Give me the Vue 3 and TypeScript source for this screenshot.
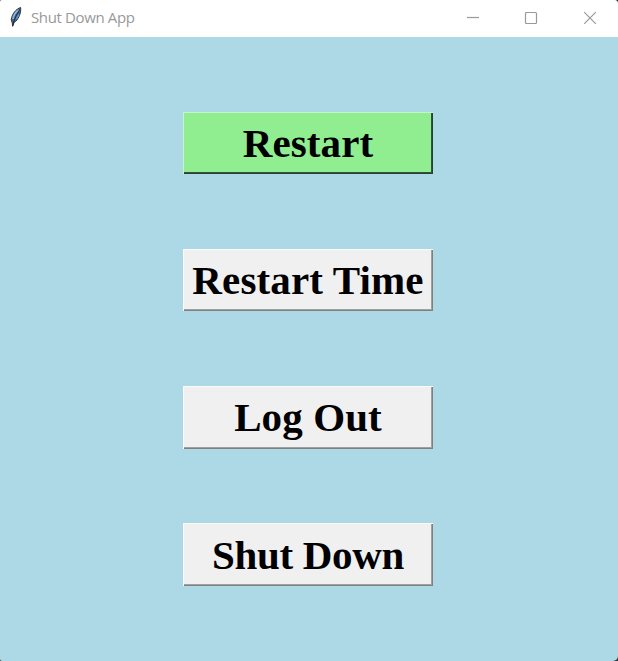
<script setup lang="ts">
interface Action {
  id: string
  label: string
  active: boolean
}

const actions: Action[] = [
  { id: 'restart', label: 'Restart', active: true },
  { id: 'restart-time', label: 'Restart Time', active: false },
  { id: 'log-out', label: 'Log Out', active: false },
  { id: 'shut-down', label: 'Shut Down', active: false },
]
</script>

<template>
  <div class="desktop">
    <div class="window">
      <header class="titlebar">
        <svg class="feather" width="14" height="20" viewBox="0 0 14 20">
          <path d="M11.6 .5 C7 2 3.1 6.6 2.2 12.8 L3.3 16 L3.6 19.3 L5 15.6 C9.3 13 12.4 6 11.6 .5Z" fill="#3e6793" stroke="#34383d" stroke-width="1" />
          <path d="M9.8 3 C6.5 5 4.5 8.5 4 12" fill="none" stroke="#86b6df" stroke-width="1.7" />
          <path d="M10.8 2.2 C8.3 7 5.2 11 3.7 19" fill="none" stroke="#20252d" stroke-width=".9" />
          <path d="M10 7.5 L7.3 11.8" stroke="#6098cc" stroke-width="1.5" />
        </svg>
        <span class="title">Shut Down App</span>
        <div class="controls">
          <button class="control" aria-label="Minimize">
            <svg width="14" height="14" viewBox="0 0 14 14"><path d="M1 6.5H13" /></svg>
          </button>
          <button class="control" aria-label="Maximize">
            <svg width="14" height="14" viewBox="0 0 14 14"><rect x="1.5" y="1.5" width="11" height="11" rx="1" /></svg>
          </button>
          <button class="control close" aria-label="Close">
            <svg width="14" height="14" viewBox="0 0 14 14"><path d="M1.2 1.2L12.8 12.8M12.8 1.2L1.2 12.8" /></svg>
          </button>
        </div>
      </header>
      <main class="content">
        <button
          v-for="action in actions"
          :key="action.id"
          class="action"
          :class="[action.id, { active: action.active }]"
        >
          {{ action.label }}
        </button>
      </main>
    </div>
  </div>
</template>

<style>
body {
  margin: 0;
}
</style>

<style scoped>
.desktop {
  width: 618px;
  height: 661px;
  background: #30363a;
}
.window {
  display: flex;
  flex-direction: column;
  height: 100%;
  overflow: hidden;
  border-radius: 2px 4px 5px 2px;
  background: #add8e6;
}
.titlebar {
  display: flex;
  align-items: center;
  box-sizing: border-box;
  height: 37px;
  flex: none;
  padding-left: 9px;
  background: #fff;
}
.feather {
  margin: 0 8px 3px 0;
}
.title {
  padding-bottom: 3px;
  font: 15px/20px "Open Sans", "Noto Sans", sans-serif;
  letter-spacing: -0.37px;
  color: #999;
}
.controls {
  display: flex;
  height: 100%;
  margin-left: auto;
}
.control {
  display: flex;
  align-items: center;
  justify-content: center;
  width: 58px;
  height: 36px;
  padding: 0;
  border: 0;
  background: none;
}
.control.close {
  padding-left: 2px;
}
.control svg {
  fill: none;
  stroke: #999;
  stroke-width: 1.2;
}
.content {
  display: flex;
  flex: 1;
  flex-direction: column;
  align-items: center;
  gap: 74px;
  padding: 75px 2px 0 0;
}
.action {
  box-sizing: border-box;
  width: 250px;
  height: 63px;
  flex: none;
  padding: 0 0 1px;
  border: 0;
  background: #f0f0f0;
  box-shadow: inset 1px 1px #fafafa, inset -1px -1px #808080, inset -2px -2px #a0a0a0;
  font: bold 41px/62px "Liberation Serif", "Times New Roman", serif;
  text-align: center;
  white-space: nowrap;
  color: #000;
}
.action.active {
  background: #90ee90;
  box-shadow: inset 1px 1px #c4f4cb, inset -1px -1px #2b4034, inset -2px -2px #36513b;
}
.action.restart,
.action.restart-time {
  height: 62px;
  margin-bottom: 1px;
  padding-bottom: 0;
}
.action.restart {
  letter-spacing: 0.1px;
}
.action.restart-time {
  letter-spacing: 0.15px;
}
.action.log-out {
  letter-spacing: 0.1px;
}
.action.shut-down {
  padding-bottom: 0;
  letter-spacing: -0.3px;
}
</style>
